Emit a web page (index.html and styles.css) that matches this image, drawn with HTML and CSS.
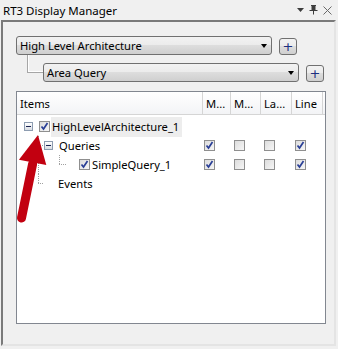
FILE: index.html
```html
<!DOCTYPE html>
<html lang="en">
<head>
    <meta charset="UTF-8">
    <title>RT3 Display Manager</title>
    <link rel="stylesheet" href="styles.css">
</head>
<body>
    <div class="titlebar">
        <span class="title">RT3 Display Manager</span>
        <div class="title-icons">
            <svg width="7" height="4" viewBox="0 0 7 4"><path d="M0 0h7L3.5 4z" fill="#3c3c3c"/></svg>
            <svg width="9" height="10" viewBox="0 0 9 10"><path d="M2 0.5h5M3 0.5v5M6 0.5v5M0.5 5.5h8M4.5 5.5v4" stroke="#3c3c3c" fill="none"/><rect x="3" y="1" width="3" height="4" fill="#3c3c3c"/></svg>
            <svg width="9" height="9" viewBox="0 0 9 9"><path d="M0.5 0.5l8 8M8.5 0.5l-8 8" stroke="#6a6a6a"/></svg>
        </div>
    </div>
    <div class="panel">
        <div class="combo-row">
            <div class="combo"><span>High Level Architecture</span><span class="drop"></span></div>
            <button class="add">+</button>
        </div>
        <div class="combo-row child">
            <span class="connector"></span>
            <div class="combo"><span>Area Query</span><span class="drop"></span></div>
            <button class="add">+</button>
        </div>
        <div class="list">
            <div class="list-head">
                <span class="col-name">Items</span>
                <span>M...</span>
                <span>M...</span>
                <span>La...</span>
                <span>Line</span>
            </div>
            <div class="list-body">
                <div class="row">
                    <div class="tree">
                        <span class="expander"></span>
                        <span class="check on"></span>
                        <span class="label selected">HighLevelArchitecture_1</span>
                    </div>
                </div>
                <div class="row">
                    <div class="tree">
                        <span class="guide elbow"></span>
                        <span class="expander"></span>
                        <span class="label">Queries</span>
                    </div>
                    <span class="cell c1"><span class="check on"></span></span>
                    <span class="cell"><span class="check"></span></span>
                    <span class="cell"><span class="check"></span></span>
                    <span class="cell"><span class="check on"></span></span>
                </div>
                <div class="row">
                    <div class="tree">
                        <span class="guide pass"></span>
                        <span class="guide last deep"></span>
                        <span class="check on"></span>
                        <span class="label">SimpleQuery_1</span>
                    </div>
                    <span class="cell c1"><span class="check on"></span></span>
                    <span class="cell"><span class="check"></span></span>
                    <span class="cell"><span class="check"></span></span>
                    <span class="cell"><span class="check on"></span></span>
                </div>
                <div class="row">
                    <div class="tree">
                        <span class="guide last"></span>
                        <span class="label leaf">Events</span>
                    </div>
                </div>
            </div>
        </div>
        <svg class="pointer" width="60" height="100" viewBox="0 0 60 100">
            <path d="M29.6 32 L18.5 86" stroke="#c20010" stroke-width="9" stroke-linecap="round"/>
            <path d="M35 3 L43.3 33 L15.9 27.8 Z" fill="#c20010"/>
        </svg>
    </div>
</body>
</html>
```

FILE: styles.css
```css
body {
    margin: 0;
    background-color: #f0f0f0;
    font-family: "Noto Sans", sans-serif;
    font-size: 11.2px;
    color: #000;
}
.titlebar {
    height: 20px;
    display: flex;
    align-items: center;
    justify-content: space-between;
    padding: 0 6px 0 3px;
}
.title {
    font-size: 11.5px;
}
.title-icons {
    display: flex;
    align-items: center;
    gap: 5px;
}
.panel {
    position: relative;
    margin-left: 1px;
    width: 331px;
    height: 322px;
    border: 2px solid;
    border-color: #7a7a7a #e4e4e4 #e4e4e4 #7a7a7a;
}
.combo-row {
    display: flex;
    gap: 7px;
    margin: 14px 0 0 13px;
}
.combo-row.child {
    margin-top: 8px;
}
.combo {
    width: 251px;
    height: 17px;
    border: 1px solid #707070;
    border-radius: 3px;
    background: linear-gradient(#f2f2f2, #ebebeb 50%, #dddddd 50%, #cfcfcf);
    display: flex;
    align-items: center;
    justify-content: space-between;
    padding: 0 0 0 3px;
}
.drop {
    width: 0;
    height: 0;
    border-left: 3.5px solid transparent;
    border-right: 3.5px solid transparent;
    border-top: 4px solid #000;
    margin-right: 4px;
}
.add {
    align-self: flex-end;
    width: 18px;
    height: 17px;
    padding: 0;
    border: 1px solid #707070;
    border-radius: 3px;
    background: linear-gradient(#f2f2f2, #ebebeb 50%, #dddddd 50%, #cfcfcf);
    font-family: "DejaVu Sans", sans-serif;
    font-size: 13px;
    line-height: 14px;
    color: #1b2f80;
}
.connector {
    align-self: flex-start;
    width: 15px;
    height: 17px;
    margin: -8px -7px 0 11px;
    border-left: 1px solid #a6a6a6;
    border-bottom: 1px solid #a6a6a6;
    box-shadow: inset 1px -1px 0 #fff;
}
.list {
    margin: 9px 0 0 13px;
    width: 308px;
    height: 231px;
    border: 1px solid #828790;
    background: #fff;
}
.list-head {
    display: grid;
    grid-template-columns: 186px 28px 30px 31px 31px;
    height: 22px;
    border-bottom: 1px solid #d5d5d5;
    background: linear-gradient(#fff, #f3f4f6);
}
.list-head span {
    display: flex;
    align-items: center;
    padding-left: 3px;
    border-right: 1px solid #d5d5d5;
}
.list-body {
    padding-top: 2px;
}
.row {
    display: grid;
    grid-template-columns: 186px 28px 30px 31px 31px;
    height: 19px;
    align-items: center;
}
.tree {
    display: flex;
    align-items: center;
    height: 19px;
}
.expander {
    width: 7px;
    height: 7px;
    border: 1px solid #8d9cb0;
    margin: 0 6px 0 7px;
    background-image: linear-gradient(#1b2452, #1b2452), linear-gradient(#fff, #d9dde3);
    background-size: 5px 1px, 100% 100%;
    background-position: center, 0 0;
    background-repeat: no-repeat;
}
.guide + .expander {
    margin-left: 0;
    margin-right: 4px;
}
.check {
    display: inline-block;
    width: 9px;
    height: 9px;
    border: 1px solid #8f8f8f;
    background: linear-gradient(135deg, #dcdcdc, #f6f6f6);
}
.check.on {
    background-image: url("data:image/svg+xml,%3Csvg xmlns='http://www.w3.org/2000/svg' width='9' height='9'%3E%3Cpath d='M1.5 4.5l2 2.5l4-6' stroke='%232a3f96' stroke-width='1.7' fill='none'/%3E%3C/svg%3E"), linear-gradient(135deg, #dcdcdc, #f6f6f6);
}
.label {
    padding: 2px 1px 3px;
    margin-left: 1px;
    white-space: nowrap;
}
.label.selected {
    background: #ededed;
    padding-right: 3px;
}
.guide {
    align-self: stretch;
    width: 6px;
    margin-left: 21px;
    background-repeat: no-repeat;
    background-image: repeating-linear-gradient(#a0a0a0 0 1px, transparent 1px 2px), repeating-linear-gradient(90deg, #a0a0a0 0 1px, transparent 1px 2px);
    background-size: 1px 100%, 100% 1px;
    background-position: 0 0, 0 9px;
}
.guide.pass {
    background-image: repeating-linear-gradient(#a0a0a0 0 1px, transparent 1px 2px);
    background-size: 1px 100%;
    width: 1px;
}
.guide.last {
    background-size: 1px 10px, 100% 1px;
    margin-right: 13px;
}
.guide.last.deep {
    margin-left: 20px;
    width: 7px;
}
.label.leaf {
    margin-left: 0;
}
.cell {
    display: flex;
    padding-left: 3px;
}
.cell.c1 {
    padding-left: 1px;
}
.pointer {
    position: absolute;
    left: 0;
    top: 110px;
}
```
